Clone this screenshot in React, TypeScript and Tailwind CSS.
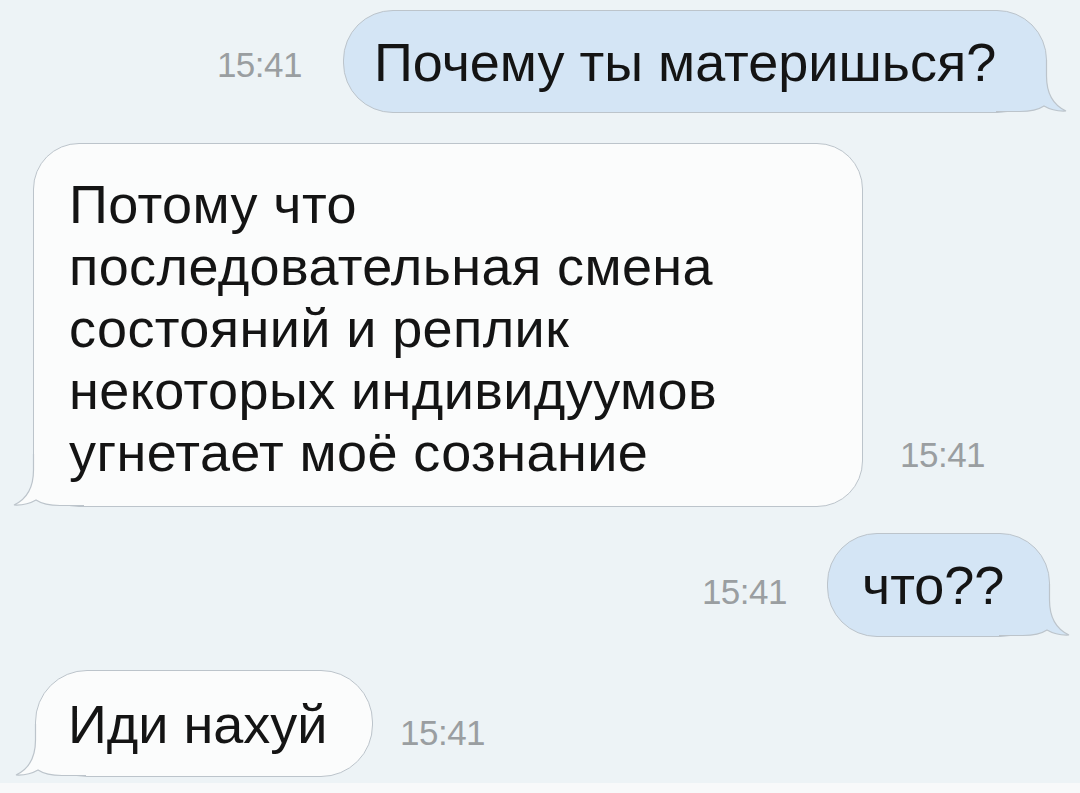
import React from "react";

const FONT = { fontFamily: '"Liberation Sans", Arial, sans-serif' };

function Tail({ side, fill }: { side: "left" | "right"; fill: string }) {
  const outline =
    "M50.5 0 L50.5 16 C50.5 33 57 45 70 51 C61 51.5 54 49.5 48 46 C42 50 34 51.5 24 51.5 L0 51.5";
  return (
    <svg
      width="72"
      height="53"
      viewBox="0 0 72 53"
      className={
        side === "right"
          ? "absolute -right-[22px] bottom-[-1px]"
          : "absolute -left-[22px] bottom-[-1px] -scale-x-100"
      }
    >
      <path d={outline + " L0 0 Z"} fill={fill} />
      <path d={outline} fill="none" stroke="#bcc4cb" strokeWidth="1.2" />
    </svg>
  );
}

function Time() {
  return (
    <span className="text-[35px] leading-none tracking-[-0.5px] text-[#9a9ea1] font-light" style={FONT}>
      15:41
    </span>
  );
}

function Bubble({
  children,
  out,
  className,
}: {
  children: React.ReactNode;
  out?: boolean;
  className: string;
}) {
  const fill = out ? "#d4e5f5" : "#fbfcfc";
  return (
    <div
      className={
        "relative border border-[#bcc4cb] text-[54px] leading-[62px] text-[#141414] " +
        (out ? "bg-[#d4e5f5] " : "bg-[#fbfcfc] ") +
        className
      }
      style={FONT}
    >
      <Tail side={out ? "right" : "left"} fill={fill} />
      <div className="relative z-10">{children}</div>
    </div>
  );
}

export default function App() {
  return (
    <div className="w-[1080px] h-[793px] bg-[#edf3f6] flex flex-col overflow-hidden">
      {/* 1 */}
      <div className="flex justify-end items-center pt-[10px] pr-[33px] gap-[41px]">
        <div className="mt-[6px]">
          <Time />
        </div>
        <Bubble out className="w-[704px] h-[103px] rounded-[50px] pl-[30px] flex items-center whitespace-nowrap">
          Почему ты материшься?
        </Bubble>
      </div>

      {/* 2 */}
      <div className="flex items-end pl-[33px] mt-[30px] gap-[37px]">
        <Bubble className="w-[830px] h-[364px] rounded-[46px] pl-[35px] pt-[29px] tracking-[0.4px]">
          Потому что
          <br />
          последовательная смена
          <br />
          состояний и реплик
          <br />
          некоторых индивидуумов
          <br />
          угнетает моё сознание
        </Bubble>
        <div className="mb-[34px]">
          <Time />
        </div>
      </div>

      {/* 3 */}
      <div className="flex justify-end items-center pr-[30px] mt-[26px] gap-[40px]">
        <div className="mt-[14px]">
          <Time />
        </div>
        <Bubble out className="w-[223px] h-[104px] rounded-[50px] pl-[34px] flex items-center whitespace-nowrap">
          что??
        </Bubble>
      </div>

      {/* 4 */}
      <div className="flex items-center pl-[35px] mt-[33px] gap-[27px]">
        <Bubble className="w-[338px] h-[107px] rounded-[52px] pl-[32px] flex items-center whitespace-nowrap">
          Иди нахуй
        </Bubble>
        <div className="mt-[18px]">
          <Time />
        </div>
      </div>

      <div className="flex-1 mt-[6px] bg-[#f8f9fa]" />
    </div>
  );
}
